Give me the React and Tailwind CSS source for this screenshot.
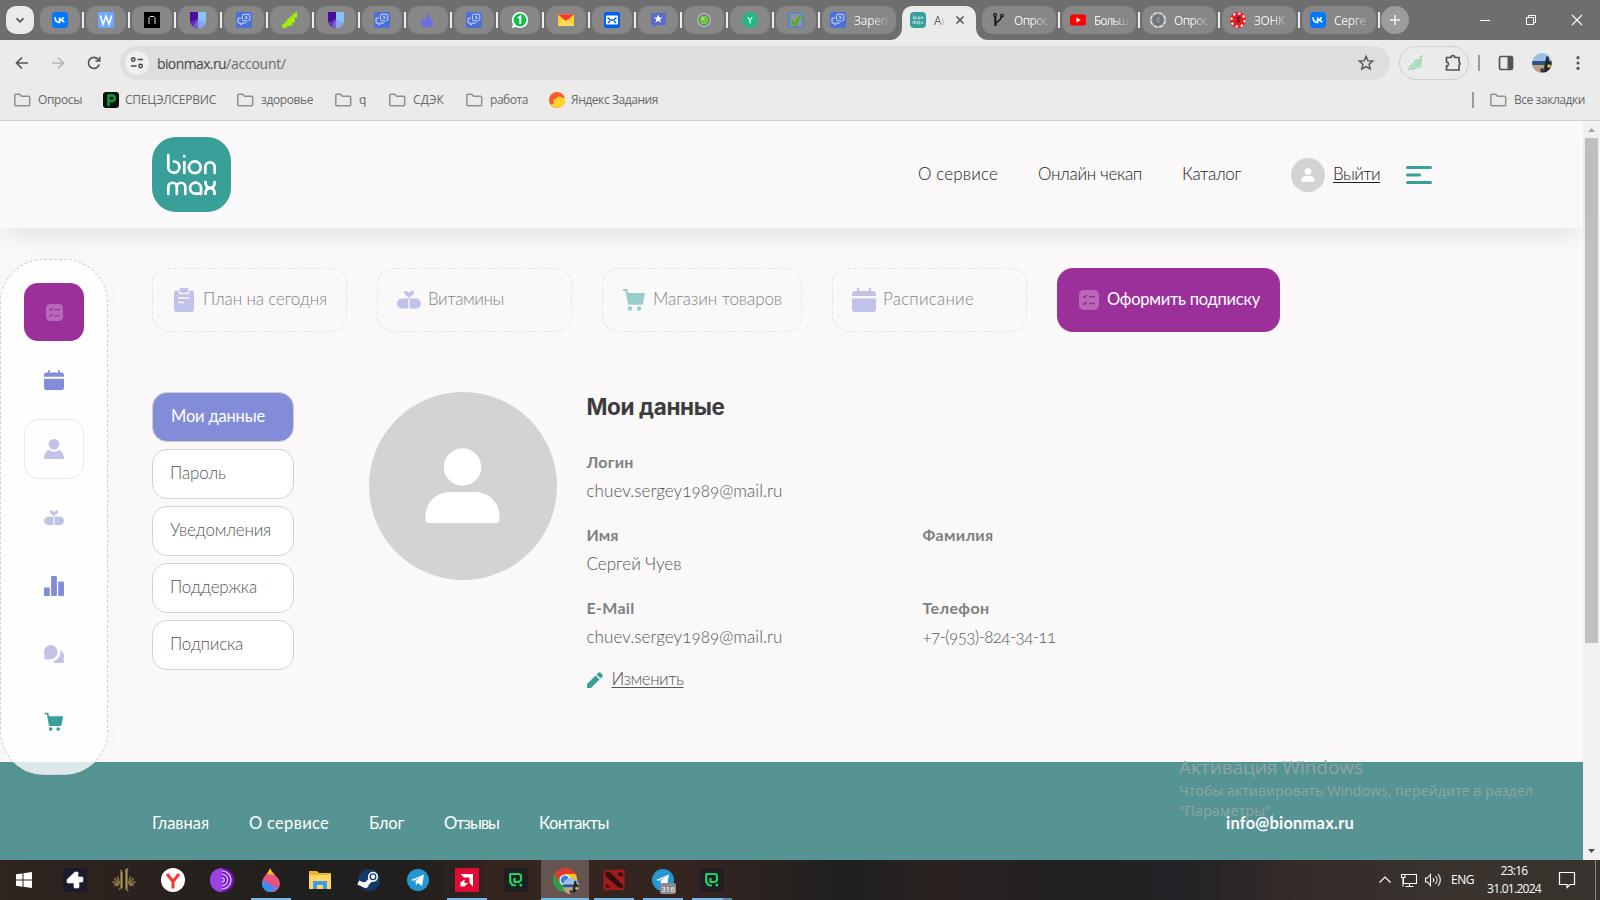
import { useLayoutEffect, useRef, useState } from "react";

/* Text tracked so that it fills exactly `w` pixels. */
function Fit({ w, className = "", children }) {
  const ref = useRef(null);
  const [ls, setLs] = useState(0);
  useLayoutEffect(() => {
    const natural = ref.current.getBoundingClientRect().width;
    setLs((w - natural) / String(children).length);
  }, []);
  return (
    <span ref={ref} className={"inline-block whitespace-pre " + className} style={{ letterSpacing: ls + "px" }}>
      {children}
    </span>
  );
}

const ui = "font-['Open_Sans','Noto_Sans',sans-serif]";

/* ---------- favicons ---------- */
const Svg = ({ s = 16, vb = "0 0 16 16", className = "", children }) => (
  <svg width={s} height={s} viewBox={vb} fill="none" className={"shrink-0 " + className}>{children}</svg>
);
const Vk = () => (
  <Svg><rect width="16" height="16" rx="4" fill="#0077ff" />
    <path d="M3 5.3c.2 3.3 2 5.2 4.600 5.200V5.300M7.600 8c2 0 3.200-1 3.900-2.700M7.800 8c2.200 0 3.700 1 4.300 2.500" stroke="#fff" strokeWidth="1.700" /></Svg>
);
const Wico = () => (
  <Svg><rect width="16" height="16" fill="#6ea8fa" /><path d="M2.300 3.500 5 12.300 8 4l3 8.300 2.700-8.800" stroke="#fff" strokeWidth="1.600" /></Svg>
);
const Nico = () => (
  <Svg><rect width="16" height="16" fill="#000" /><path d="M5 12V5.500l1-1h4l1 1V12" stroke="#ddd" strokeWidth="1" /></Svg>
);
const Shield = () => (
  <Svg><path d="M0 0h8v16A8 8 0 0 1 0 8z" fill="#4b0c9c" /><path d="M8 0h8v8a8 8 0 0 1-8 8z" fill="#86c2f8" />
    <path d="M.5 10.500 8 7v9a8 8 0 0 1-7.500-5.500z" fill="#5f35b5" /><path d="M3.500 14.500 8 7v9a8 8 0 0 1-4.500-1.500z" fill="#7a62d0" /><path d="m8 7 7.300 4.500A8 8 0 0 1 8 16z" fill="#8ba4f0" /></Svg>
);
const Chat = () => (
  <Svg><rect width="16" height="16" rx="2" fill="#4a6fd6" />
    <path d="M6.500 3.200q0-.9.900-.9l5.600-.1q.8 0 .8.900v4.500q0 .9-.9.900h-1l-1 1.200-1-1.200H7.400q-.9 0-.9-.9z" stroke="#c9d6fb" strokeWidth="1" />
    <path d="M5 6H3q-1 0-1 1v3q0 1 1 1h1l1.200 1.700L6.400 11H9q.8 0 .8-.8" stroke="#c9d6fb" strokeWidth="1.100" />
    <path d="M11.200 4.200H9.600v1.200h1.500v1.300H9.400" stroke="#c9d6fb" strokeWidth=".8" /></Svg>
);
const Green = () => (
  <Svg><path d="M1.500 15v-2M4 14.500V10.500M6.500 13V7.500M9 12.500V5.500M11.500 9.500V3M14 4.500V1.500" stroke="#a4f307" strokeWidth="2.500" strokeLinecap="round" /></Svg>
);
const Purple = () => <Svg><path d="M8 0 10.500 7 13 8.500V15H2L1 7.500l5 1z" fill="#6a6ee0" /></Svg>;
const Wa = () => (
  <Svg><path d="M8 0a8 8 0 1 1-3.700 15L0 16l1-4A8 8 0 0 1 8 0z" fill="#fff" /><circle cx="8" cy="8" r="6.500" fill="#0fc04a" />
    <path d="M6 6l2.300-1.500V12" stroke="#fff" strokeWidth="1.900" /></Svg>
);
const MailY = () => (
  <Svg><path d="M0 2.500h16V14H0z" fill="#ffcf33" /><path d="M0 2.500h16L8 9z" fill="#f33" /><path d="M0 14 6 7.500 8 9l2-1.500 6 6.500z" fill="#ffdc60" /></Svg>
);
const MailB = () => (
  <Svg><rect width="16" height="16" rx="2" fill="#005ff9" /><rect x="2" y="3.500" width="12" height="9" rx="1" fill="#fff" />
    <path d="m3.500 5.500 3 2.500h3l3-2.500M4 11l2-2M12 11l-2-2" stroke="#005ff9" strokeWidth="1.500" /></Svg>
);
const Star = () => (
  <Svg><path d="M1 1h15v12H7l-4 2.500V13H1z" fill="#5c6bc8" /><path d="m8.200 2.500 1.200 3h3L10 7.500l1 3-2.800-1.800-2.800 1.800 1-3L4 5.500h3z" fill="#fff" /></Svg>
);
const Dot = () => (
  <Svg><circle cx="8" cy="8" r="6.300" fill="#6b7567" stroke="#bbb" strokeWidth="1.300" /><circle cx="8" cy="8" r="4.500" fill="#6cc644" /><circle cx="7" cy="6.500" r="1.500" fill="#a7e58a" /></Svg>
);
const Yico = () => (
  <Svg><circle cx="8" cy="8" r="8" fill="#27b383" /><path d="m5.700 5 2.300 3.300L10.300 5M8 8v3.500" stroke="#d8fff0" strokeWidth="1.300" /></Svg>
);
const Check = () => (
  <Svg><path d="M1 1h14v14H1z" fill="#8d95a0" stroke="#5183cc" strokeWidth="1.500" /><path d="m3.500 8.500 3.500 4.500L13 3" stroke="#4faf16" strokeWidth="2.300" /></Svg>
);
const Bion = () => (
  <Svg><rect width="16" height="16" rx="4" fill="#38a098" />
    <path d="M3.500 3v4h2V5h-2M6.800 4.800V7M8.300 5h1.700v2H8.300zM11.200 7V5h1.800v2M3 12V9.500h3V12M4.500 9.500V12M7.500 9.500h2V12h-2zM11 9.500l2.300 2.500M13.300 9.500 11 12" stroke="#bfe5e0" strokeWidth=".8" /></Svg>
);
const Fork = () => (
  <Svg><circle cx="5" cy="3" r="1.400" stroke="#111" strokeWidth="1.100" /><circle cx="12" cy="3.500" r="1.300" stroke="#111" strokeWidth="1.100" />
    <path d="M5.200 4.500 5.600 14" stroke="#111" strokeWidth="2" /><path d="M6 11c1.500-1.500 4.500-2 5.300-6" stroke="#111" strokeWidth="1.400" /></Svg>
);
const Yt = () => <Svg><rect y="2.500" width="16" height="11" rx="2.500" fill="#f00" /><path d="M6.500 5.500 11 8l-4.500 2.500z" fill="#fff" /></Svg>;
const Coin = () => (
  <Svg><circle cx="8" cy="8" r="7.200" stroke="#dfe2e4" strokeWidth="1.600" strokeDasharray="4.600 1.050" /><circle cx="8" cy="8" r="5.200" fill="#6e7378" />
    <path d="M10 6c-2-1.500-4 .3-2 1.500 2.500 1.200 1 3.200-2 2" stroke="#999da1" strokeWidth="1.200" /></Svg>
);
const Chip = () => (
  <Svg><circle cx="8" cy="8" r="8" fill="#ee1c20" /><circle cx="8" cy="8" r="6.600" stroke="#fff" strokeWidth="2" strokeDasharray="2.400 2.784" /><circle cx="8" cy="8" r="4.700" fill="#e0262b" />
    <path d="M10.500 6c-2-1.700-5 .3-2.500 1.500 2.500 1.200 1 3.200-2 2" stroke="#501216" strokeWidth="1.300" /></Svg>
);

const pinned = [Vk, Wico, Nico, Shield, Chat, Green, Shield, Chat, Purple, Chat, Wa, MailY, MailB, Star, Dot, Yico, Check];
const later = [[Fork, "Опрос", 34], [Yt, "Больш", 34], [Coin, "Опрос", 34], [Chip, "ЗОНК", 31], [Vk, "Серге", 32]];

const Sep = () => <div className="mx-0.5 h-4 w-0.5 shrink-0 bg-[#ececec]" />;

function WideTab({ Icon, text, w }) {
  return (
    <div className="flex h-7 w-[74px] shrink-0 items-center gap-2 overflow-hidden rounded-[10px] bg-[#878787] pl-2">
      <Icon />
      <div className="w-[36px] overflow-hidden mask-r-from-50% text-[12px] leading-5 text-[#f2f2f2]"><Fit w={w} className="mt-px">{text}</Fit></div>
    </div>
  );
}

function TabStrip() {
  return (
    <div className={"flex h-10 items-center bg-[#6e6e6e] pl-1.5 " + ui}>
      <div className="mr-1.5 flex h-7 w-7 shrink-0 items-center justify-center rounded-[10px] bg-[#ebebeb]">
        <Svg><path d="m4.500 6.300 3.500 3.500 3.500-3.500" stroke="#555" strokeWidth="1.700" /></Svg>
      </div>
      {pinned.map((I, i) => (
        <div key={i} className="flex shrink-0 items-center">
          <div className="flex h-7 w-10 items-center justify-center rounded-[10px] bg-[#878787]"><I /></div>
          <Sep />
        </div>
      ))}
      <WideTab Icon={Chat} text="Зареп" w={34} />
      <div className="relative mx-1.5 mt-1.5 flex h-[34px] w-[74px] shrink-0 items-center rounded-t-[10px] bg-[#ebebeb] pb-1.5 pl-2">
        <svg width="12" height="12" className="absolute bottom-0 -left-3"><path d="M12 0v12H0A12 12 0 0 0 12 0z" fill="#ebebeb" /></svg>
        <svg width="12" height="12" className="absolute -right-3 bottom-0"><path d="M0 0v12h12A12 12 0 0 1 0 0z" fill="#ebebeb" /></svg>
        <Bion />
        <div className="ml-2 w-[11px] overflow-hidden mask-r-from-40% pt-px text-[12px] text-[#555]">Ак</div>
        <Svg className="ml-[7px]"><path d="m4.500 4.500 7 7m0-7-7 7" stroke="#555" strokeWidth="1.600" /></Svg>
      </div>
      {later.map(([I, t, w], i) => (
        <div key={i} className="flex shrink-0 items-center"><WideTab Icon={I} text={t} w={w} /><Sep /></div>
      ))}
      <div className="-ml-px flex h-7 w-7 shrink-0 items-center justify-center rounded-full bg-[#9c9c9c]">
        <Svg><path d="M8 3v10M3 8h10" stroke="#f4f4f4" strokeWidth="1.500" /></Svg>
      </div>
      <div className="mr-[17px] ml-auto flex gap-[34px]">
        <Svg s={12} vb="0 0 12 12"><path d="M1 6.500h10" stroke="#fff" /></Svg>
        <Svg s={12} vb="0 0 12 12"><path d="M1.500 3.500h7v7h-7zM3.500 3.500v-2h7v7h-2" stroke="#fff" /></Svg>
        <Svg s={12} vb="0 0 12 12"><path d="m1 1 10 10M11 1 1 11" stroke="#fff" strokeWidth="1.100" /></Svg>
      </div>
    </div>
  );
}

function Toolbar() {
  return (
    <div className={"flex h-[46px] items-center bg-[#ebebeb] pl-[14px] " + ui}>
      <Svg className="mr-5"><path d="M14 8H3M8 2.500 2.500 8 8 13.500" stroke="#555" strokeWidth="1.700" /></Svg>
      <Svg className="mr-5"><path d="M2 8h11M8 2.500 13.500 8 8 13.500" stroke="#b5b5b5" strokeWidth="1.700" /></Svg>
      <Svg className="mr-[18px]"><path d="M13.200 9.500A5.500 5.500 0 1 1 12 4.200L13.500 6M13.700 1.800V6H9.500" stroke="#555" strokeWidth="1.700" /></Svg>
      <div className="flex h-[34px] w-[1270px] items-center rounded-full bg-[#dedede] pl-[5px]">
        <div className="mr-2 flex h-6 w-6 items-center justify-center rounded-full bg-[#f0f0f0]">
          <Svg s={14} vb="0 0 14 14"><path d="M7.500 3.500H13M1 10h5.500" stroke="#444" strokeWidth="1.600" /><circle cx="3.300" cy="3.500" r="1.700" stroke="#444" strokeWidth="1.400" /><circle cx="10.600" cy="10" r="1.700" stroke="#444" strokeWidth="1.400" /></Svg>
        </div>
        <div className="text-[14px] text-[#6a6a6a]"><Fit w={69} className="text-[#444]">bionmax.ru</Fit><Fit w={60}>/account/</Fit></div>
        <Svg s={18} vb="0 0 18 18" className="mr-[15px] ml-auto"><path d="m9 2.300 1.900 4.400 4.800.4-3.600 3.200 1.100 4.700L9 12.500 4.800 15l1.100-4.700-3.600-3.200 4.800-.4z" stroke="#5a5a5a" strokeWidth="1.500" /></Svg>
      </div>
      <div className="ml-[9px] flex h-[34px] w-[70px] items-center rounded-full border border-[#cfcfcf] pl-2">
        <Svg><path d="M0 16c.5-5 4-8 7-9.500l-1.500-1L11 4l1-3 4-.8-2.500 3 .5 3-1 3 1 2-3 1.500-3 .5-2 1.500-3-.2z" fill="#a6d9b8" /><path d="m3 10 8-3M2 12.500l10-2.500" stroke="#c6eacf" strokeWidth=".8" /></Svg>
        <Svg s={18} vb="0 0 18 18" className="ml-5"><path d="M3 3.500h4a1.900 1.900 0 0 1 3.800 0H15v4.400a1.900 1.900 0 0 1 0 3.400V16H2.500v-4c2.500.3 2.500-4.200 0-4V3.500z" stroke="#555" strokeWidth="1.700" /></Svg>
      </div>
      <div className="ml-[9px] h-4 w-0.5 bg-[#9a9a9a]" />
      <Svg className="ml-[18px]"><rect x="1.500" y="1.500" width="13" height="13" rx="1.500" stroke="#555" strokeWidth="1.700" /><path d="M9.500 2H14v12H9.500z" fill="#555" /></Svg>
      <Portrait s={20} className="ml-[18px]" />
      <Svg className="ml-[18px]"><circle cx="8" cy="2.700" r="1.600" fill="#555" /><circle cx="8" cy="8" r="1.600" fill="#555" /><circle cx="8" cy="13.300" r="1.600" fill="#555" /></Svg>
    </div>
  );
}

const Portrait = ({ s, className = "" }) => (
  <svg width={s} height={s} viewBox="0 0 20 20" className={"shrink-0 overflow-hidden rounded-full " + className}>
    <path d="M0 0h20v20H0z" fill="#9cc0e4" /><path d="M0 8h20v4H0z" fill="#2c5688" /><path d="M0 12h20v8H0z" fill="#c0a084" />
    <path d="m14.500 3 2 1 .5 3 2 4-1 5-4 4-5-1-1-3 4-1 1-5z" fill="#26252a" /><circle cx="17" cy="13" r="1.700" fill="#e3c63b" /><circle cx="11" cy="16.500" r="1.500" fill="#555" />
  </svg>
);

const Folder = () => (
  <Svg s={18} vb="0 0 18 18"><path d="M1.800 4.300c0-.6.400-1 1-1h3.900l1.800 2h7.200c.6 0 1 .4 1 1v7.400c0 .6-.4 1-1 1H2.800c-.6 0-1-.4-1-1z" stroke="#8f8f8f" strokeWidth="1.500" /></Svg>
);

function Bookmarks() {
  const cls = "text-[12px] leading-5 text-[#686868]";
  return (
    <div className={"flex h-[34px] items-center bg-[#ebebeb] pb-[6px] pl-[13px] " + ui}>
      <Folder /><Fit w={44} className={cls + " ml-[7px]"}>Опросы</Fit>
      <Svg className="ml-[21px]"><rect width="16" height="16" rx="3" fill="#06130b" /><path d="M5.500 14V3.500H9a2.700 2.700 0 0 1 0 5.500H6" stroke="#0b9a45" strokeWidth="2.600" /></Svg>
      <Fit w={91} className={cls + " ml-[6px]"}>СПЕЦЭЛСЕРВИС</Fit>
      <div className="ml-5 flex items-center gap-[7px]"><Folder /><Fit w={52} className={cls}>здоровье</Fit></div>
      <div className="ml-[21px] flex items-center gap-[7px]"><Folder /><Fit w={8} className={cls}>q</Fit></div>
      <div className="ml-[21px] flex items-center gap-[7px]"><Folder /><Fit w={31} className={cls}>СДЭК</Fit></div>
      <div className="ml-[21px] flex items-center gap-[7px]"><Folder /><Fit w={38} className={cls}>работа</Fit></div>
      <Svg className="ml-[21px]"><circle cx="8" cy="8" r="8" fill="#fd5a2a" /><path d="M1.500 12.500c2.500.5 4-1 3-3-1-1.500.500-3.500 2.500-2 .5-2.500 3.500-4 5-2.500s2.500.500 3.800 1A8 8 0 0 1 1.500 12.500z" fill="#ffd42c" /></Svg>
      <Fit w={87} className={cls + " ml-[6px]"}>Яндекс Задания</Fit>
      <div className="mr-[15px] ml-auto h-4 w-0.5 bg-[#9a9a9a]" />
      <div className="mr-[15px] flex items-center gap-[7px]"><Folder /><Fit w={71} className={cls}>Все закладки</Fit></div>
    </div>
  );
}

/* ---------- site icons ---------- */
const Calendar = ({ s }) => (
  <Svg s={s} vb="0 0 24 24" className="fill-current"><path d="M5 0h2v3h10V0h2v3h2a3 3 0 0 1 3 3v2H0V6a3 3 0 0 1 3-3h2zM0 10.500h24V21a3 3 0 0 1-3 3H3a3 3 0 0 1-3-3z" /></Svg>
);
const Pills = ({ s }) => (
  <Svg s={s} vb="0 0 24 24" className="fill-current"><path d="M7 3c2.500-.3 4 .4 5 2 1-1.600 2.500-2.300 5-2 0 3.300-1.500 5-4.300 5.500v2h6.300a5 5 0 0 1 0 10h-6.300v-10h-1.400v10H5a5 5 0 0 1 0-10h6.300v-2C8.500 8 7 6.300 7 3z" /></Svg>
);
const Cart = ({ s }) => (
  <Svg s={s} vb="0 0 24 24" className="fill-current"><path d="M1 1h4.200l.8 4h17l-2 10.500a1.500 1.500 0 0 1-1.500 1.200H6L3.500 3H1z" /><circle cx="8" cy="20.500" r="2.200" /><circle cx="17" cy="20.500" r="2.200" /></Svg>
);
const Clip = () => (
  <Svg s={24} vb="0 0 24 24"><path d="M4.500 2.500h1.800v1A2.800 2.800 0 0 0 9 6.300h6a2.800 2.800 0 0 0 2.700-2.800v-1h1.800a2.500 2.500 0 0 1 2.500 2.500v16.500a2.500 2.500 0 0 1-2.500 2.500h-15A2.500 2.500 0 0 1 2 21.500V5a2.500 2.500 0 0 1 2.500-2.500z" fill="currentColor" /><rect x="7.300" width="9.400" height="4.800" rx="1.800" fill="currentColor" /><path d="M6.500 10h10M6.500 14.500h5" stroke="#faf8f9" strokeWidth="1.300" strokeLinecap="round" /></Svg>
);
const Tasks = ({ s }) => (
  <Svg s={s} vb="0 0 20 20"><rect width="20" height="20" rx="5" fill="#fff" fillOpacity=".28" />
    <path d="m4 6.600 1.300 1L7.700 5M4 13.400l1.300 1 2.400-2.600M10 6.700h6M10 13.600h6" stroke="#9b309b" strokeWidth="1.500" /></Svg>
);
const Person = () => (
  <Svg s={20} vb="0 0 20 20" className="fill-current"><circle cx="10" cy="5.300" r="5.300" /><path d="M0 20c0-4.500 2-8 4.500-9 3.300 2.200 7.700 2.200 11 0C18 12 20 15.500 20 20z" /></Svg>
);
const Bars = () => (
  <Svg s={20} vb="0 0 20 20" className="fill-current"><rect y="11.500" width="5.800" height="8.500" rx="1" /><rect x="7.100" width="5.800" height="20" rx="1" /><rect x="14.200" y="5.500" width="5.800" height="14.500" rx="1" /></Svg>
);
const Talk = () => (
  <Svg s={20} vb="0 0 20 20" className="fill-current"><path d="M7.500 1A7.200 7.200 0 1 1 5 15.200L.5 15.500V11A7.300 7.300 0 0 1 7.500 1z" /><path d="M16.200 6a6.600 6.600 0 0 1 3.200 9l.6 4-4.500-.3c-2.500.7-5 .3-6.800-1.500C14.500 16.500 17.500 11.500 16.200 6z" /></Svg>
);
const Avatar = ({ s }) => (
  <svg width={s} height={s} viewBox="0 0 188 188" className="shrink-0"><circle cx="94" cy="94" r="94" fill="#d3d3d3" /><circle cx="93.500" cy="75" r="18.700" fill="#fff" />
    <path d="M56.500 125c0-15 11-25 25-25h24c14 0 25 10 25 25v3a3 3 0 0 1-3 3h-68a3 3 0 0 1-3-3z" fill="#fff" /></svg>
);

function Logo() {
  return (
    <svg width="79" height="75" viewBox="0 0 79 75" className="shrink-0">
      <rect width="79" height="75" rx="24" fill="#38a098" />
      <g fill="none" stroke="#fff" strokeWidth="2.700" strokeLinecap="round">
        <path d="M16.300 18v13a5.600 5.600 0 1 0 5.600-6.500" />
        <path d="M32.300 25v11M32.300 19.200v.2" />
        <circle cx="42.800" cy="30.300" r="5.900" />
        <path d="M53.300 36v-6a4.700 4.700 0 0 1 9.400 0v6" />
        <path d="M16.300 57v-7a4.200 4.200 0 0 1 8.500 0v7M24.800 50a4.200 4.200 0 0 1 8.500 0v7" />
        <path d="M49 57v-6.500a5.500 5.500 0 1 0-5.500 6.200H49" />
        <path d="M53.500 45c0 3.500 1.500 5.800 4.600 5.800s4.600-2.300 4.600-5.800M53.500 57c0-3.500 1.500-5.800 4.600-5.800s4.600 2.300 4.600 5.800" />
      </g>
    </svg>
  );
}

function SiteHeader() {
  return (
    <header className="relative flex h-[107px] shrink-0 items-center bg-[#faf8f9] pl-[152px] text-[17px] font-light text-[#222] shadow-[0_12px_22px_-6px_rgba(0,0,0,0.10)]">
      <Logo />
      <nav className="ml-[687px] flex items-center gap-10 pb-0.5">
        <Fit w={80}>О сервисе</Fit><Fit w={104}>Онлайн чекап</Fit><Fit w={59}>Каталог</Fit>
      </nav>
      <div className="ml-[50px] flex items-center gap-2">
        <Avatar s={34} /><Fit w={47} className="-mt-0.5 underline underline-offset-2">Выйти</Fit>
      </div>
      <svg width="26" height="18" className="ml-[26px]"><path d="M1.500 1.500h23M1.500 9h12M1.500 16.500h23" stroke="#38a098" strokeWidth="3" strokeLinecap="round" /></svg>
    </header>
  );
}

function Card({ icon, text, w, className, iconClass }) {
  return (
    <div className={"flex h-16 items-center gap-[7px] rounded-2xl border border-dashed border-[#e3e1e2] pl-[19px] text-[17px] font-light text-[#858485] " + className}>
      <span className={iconClass}>{icon}</span><Fit w={w} className="-mt-0.5">{text}</Fit>
    </div>
  );
}

const menu = [["Пароль", 56], ["Уведомления", 101], ["Поддержка", 87], ["Подписка", 73]];

const Field = ({ label, lw, value, vw }) => (
  <div className="h-[73px] text-[16px] leading-[29px] text-[#808080]">
    <div className="font-bold"><Fit w={lw}>{label}</Fit></div>
    {value && <div className="text-[17px] font-light text-[#555] oldstyle-nums"><Fit w={vw}>{value}</Fit></div>}
  </div>
);

function Page() {
  return (
    <div className="relative flex h-[739px] font-[Lato,'Open_Sans',sans-serif]">
      <div className="flex w-[1583px] shrink-0 flex-col bg-[#faf8f9]">
        <SiteHeader />
        <div className="flex gap-[30px] pt-10 pl-[152px]">
          <Card className="w-[195px]" icon={<Clip />} iconClass="text-[#bfc2e9]" text="План на сегодня" w={124} />
          <Card className="w-[195px]" icon={<Pills s={24} />} iconClass="text-[#bfc2e9]" text="Витамины" w={76} />
          <Card className="w-[200px]" icon={<Cart s={24} />} iconClass="text-[#99cec8]" text="Магазин товаров" w={129} />
          <Card className="w-[195px]" icon={<Calendar s={24} />} iconClass="text-[#bfc2e9]" text="Расписание" w={91} />
          <div className="flex h-16 w-[223px] items-center gap-2 rounded-2xl bg-[#9b309b] pl-[22px] text-[16.500px] text-white"><Tasks s={20} /><Fit w={153} className="-mt-0.5">Оформить подписку</Fit></div>
        </div>
        <div className="flex pt-[60px] pl-[152px]">
          <div className="flex w-[142px] flex-col gap-[7px] text-[17px] font-light text-[#555]">
            <div className="flex h-[50px] items-center rounded-[15px] border border-[#cfcfd3] bg-[#838cd8] pb-0.5 pl-[18px] text-[16.500px] font-normal text-white"><Fit w={94}>Мои данные</Fit></div>
            {menu.map(([t, w]) => (
              <div key={t} className="flex h-[50px] items-center rounded-[15px] border border-[#d3d3d3] bg-white pb-0.5 pl-[17px]"><Fit w={w}>{t}</Fit></div>
            ))}
          </div>
          <div className="ml-[75px]"><Avatar s={188} /></div>
          <div className="ml-[29.500px]">
            <h1 className="mt-px mb-[26px] font-[Inter,sans-serif] text-[22.500px] leading-7 font-bold text-[#3c3c3c]"><Fit w={138}>Мои данные</Fit></h1>
            <div className="grid grid-cols-[336px_auto]">
              <Field label="Логин" lw={47} value="chuev.sergey1989@mail.ru" vw={196} /><div />
              <Field label="Имя" lw={32} value="Сергей Чуев" vw={95} />
              <Field label="Фамилия" lw={71} />
              <Field label="E-Mail" lw={48} value="chuev.sergey1989@mail.ru" vw={196} />
              <Field label="Телефон" lw={67} value="+7-(953)-824-34-11" vw={133} />
            </div>
            <div className="-mt-0.5 flex items-center gap-[9px] text-[17px] leading-[29px] font-light text-[#555]">
              <Svg className="mt-0.5"><path d="M0 12 8.500 3.500l4 4L4 16H0zM9.500 2.500 11 .9a2 2 0 0 1 2.800 0l1.300 1.300a2 2 0 0 1 0 2.800l-1.600 1.500z" fill="#38a098" /></Svg>
              <Fit w={72} className="underline underline-offset-2">Изменить</Fit>
            </div>
          </div>
        </div>
        <footer className="mt-auto flex h-[98px] items-center bg-[#569393] pt-6 pl-[152px] text-[16.500px] text-white">
          <nav className="flex gap-10">
            <Fit w={57}>Главная</Fit><Fit w={80}>О сервисе</Fit><Fit w={35}>Блог</Fit><Fit w={55}>Отзывы</Fit><Fit w={70}>Контакты</Fit>
          </nav>
          <Fit w={128} className="ml-[617px] font-bold">info@bionmax.ru</Fit>
        </footer>
      </div>
      <div className="flex w-[17px] flex-col items-center bg-[#f1f1f1]">
        <svg width="17" height="17"><path d="m5 11 3.500-4 3.500 4z" fill="#a3a3a3" /></svg>
        <div className="h-[505px] w-[13px] bg-[#c1c1c1]" />
        <svg width="17" height="17" className="mt-auto"><path d="m5 6 3.500 4L12 6z" fill="#505050" /></svg>
      </div>
      <aside className="absolute top-[138px] left-0 flex h-[516px] w-[108px] flex-col items-center rounded-[44px] border border-dashed border-[#cfcfcf] bg-white/80 pt-[23px] text-[#bfc2e9] shadow-[0_0_24px_0_rgba(0,0,0,0.02)]">
        <div className="flex h-[58px] w-[60px] items-center justify-center rounded-[14px] bg-[#9b309b]"><Tasks s={17} /></div>
        <div className="mt-[29px] text-[#838cd8]"><Calendar s={20} /></div>
        <div className="mt-[29px] flex h-[60px] w-[60px] items-center justify-center rounded-[14px] border border-[#e9e9e9]"><Person /></div>
        <div className="mt-[29px]"><Pills s={20} /></div>
        <div className="mt-[48px] text-[#838cd8]"><Bars /></div>
        <div className="mt-[48px]"><Talk /></div>
        <div className="mt-[48px] text-[#38a098]"><Cart s={20} /></div>
      </aside>
      <div className={"absolute top-[633px] left-[1179px] flex w-[370px] flex-col items-start text-[#8fa5a4] " + ui}>
        <Fit w={184} className="text-[19px] leading-[27px]">Активация Windows</Fit>
        <Fit w={354} className="text-[14px] leading-5">Чтобы активировать Windows, перейдите в раздел</Fit>
        <Fit w={96} className="text-[14px] leading-5">"Параметры".</Fit>
      </div>
    </div>
  );
}

/* ---------- taskbar ---------- */
const Pbet = () => (
  <Svg s={24} vb="0 0 24 24"><rect width="24" height="24" fill="#1f1f21" /><path d="M12 17.500 8.500 17 6.200 14V6h8.300q2.500 0 2.500 2.500v3.500l-2 2h-4.500V10" stroke="#21d366" strokeWidth="2.200" strokeLinejoin="round" /><circle cx="16.800" cy="17" r="1.500" fill="#21d366" /></Svg>
);
const Tg = () => (
  <Svg s={24} vb="0 0 24 24"><circle cx="12" cy="12" r="11" fill="#2297d3" /><path d="m5 12 13-5.500-2 11.500-4-3-2 2-.5-4 5-4-6.500 3.700z" fill="#fff" /></Svg>
);
const apps = [
  [<Svg s={16} className="-ml-1"><path d="M0 2.300 6.500 1.400V7.500H0zM7.500 1.200 16 0v7.500H7.500zM0 8.500h6.500v6.200L0 13.800zM7.500 8.500H16V16l-8.500-1.200z" fill="#fff" /></Svg>],
  [<Svg s={24} vb="0 0 24 24"><rect width="24" height="24" rx="3" fill="#1b1b2d" /><path d="M12 4h3v5h4q1 0 1 1v3q0 1-1 1h-3v5q0 1-1 1h-3q-1 0-1-1v-4H5q-1 0-1-1v-2.500z" fill="#fff" stroke="#fff" strokeWidth=".6" strokeLinejoin="round" /></Svg>],
  [<Svg s={24} vb="0 0 24 24"><path d="M9.500 3.500v17M14.500 1v20.500" stroke="#b29b5c" strokeWidth="2" /><path d="M8 2.500h1.500M14.500 1H16.500M8.500 21h-2M14.500 22.500h2" stroke="#b29b5c" strokeWidth="1" /><path d="M7.500 16 5.500 8.500M7 16.500 2.500 10M6.500 17 .5 13.500M6.500 17.500 2 17M16.500 16l2-7.500M17 16.500l4.500-6.500M17.500 17l6-3.500M17.500 17.500l4.500-.5" stroke="#8a7745" strokeWidth="1.500" /></Svg>],
  [<Svg s={24} vb="0 0 24 24"><circle cx="12" cy="12" r="12" fill="#fff" /><path d="m6 6 6 7.500L18 6M12 13v7.500" stroke="#f33a32" strokeWidth="3" /></Svg>],
  [<Svg s={24} vb="0 0 24 24"><circle cx="12" cy="12" r="12" fill="#7212c9" /><path d="M12 0a12 12 0 0 0 0 24z" fill="#9b43e4" /><path d="M12 3a9 9 0 0 1 0 18M12 6.300a5.700 5.700 0 0 1 0 11.400M12 9.800a2.200 2.200 0 0 1 0 4.400" stroke="#d9b4f7" strokeWidth="1.500" /></Svg>],
  [<Svg s={24} vb="0 0 24 24"><path d="M11 0c1 5 10 9 10 15.500a9 9 0 0 1-18 0C3 9 9 6 11 0z" fill="#e5557c" /><path d="M11 0c1 3 3 5 5 7l-8-1c1.500-2 2.500-3.500 3-6z" fill="#fcc50c" /><path d="M4 12c5-1 8 7 16 6a9 9 0 0 1-16.500 0z" fill="#8d6bd1" /><path d="M3 15c5-1 8 6 14 6.500C11 26 3 23 3 15z" fill="#1d9cf0" /></Svg>, "w-10"],
  [<Svg s={24} vb="0 0 24 24"><path d="M1 3h8l2 2h12v16H1z" fill="#f0b429" /><path d="M1 7h22v14H1z" fill="#ffd667" /><path d="M5 13h14v8h-4v-4H9v4H5z" fill="#3b9be6" /></Svg>],
  [<Svg s={24} vb="0 0 24 24"><circle cx="12" cy="12" r="11" fill="#12396a" /><path d="M1.200 14.500 7 17" stroke="#fff" strokeWidth="4.500" /><circle cx="8.500" cy="17" r="3" fill="#fff" /><path d="m9 16.500 5-5" stroke="#fff" strokeWidth="4.500" /><circle cx="16" cy="8.800" r="4.300" fill="#12396a" stroke="#fff" strokeWidth="1.600" /><circle cx="16" cy="8.800" r="2.200" fill="#fff" /></Svg>],
  [<Tg />],
  [<Svg s={24} vb="0 0 24 24"><rect width="24" height="24" fill="#df0a35" /><path d="M5.500 6H18v12.500l-3.500-3.500V9.500H9zM9.500 11.500V15h3.500L9.500 18.500H5.500v-4z" fill="#fff" /></Svg>, "w-10"],
  [<Pbet />],
  [<div className="relative h-6 w-6"><Svg s={24} vb="0 0 24 24"><circle cx="12" cy="12" r="12" fill="#dd3b2e" /><path d="M12 12 1.600 6A12 12 0 0 0 12 24l5-9z" fill="#2c9e4b" /><path d="M12 12h0l5.200 3L12 24A12 12 0 0 0 22.400 6H12z" fill="#fbc117" /><path d="M1.600 6A12 12 0 0 1 22.400 6H12v6L6.800 15z" fill="#dd3b2e" /><circle cx="12" cy="12" r="5.600" fill="#fff" /><circle cx="12" cy="12" r="4.400" fill="#3b7ded" /></Svg><Portrait s={16} className="absolute -right-0.5 -bottom-0.5" /></div>, "w-12", true],
  [<Svg s={24} vb="0 0 24 24"><path d="m1.500 2 21-.5v20.500l-21 .5z" fill="#a31a1d" /><path d="m3.500 3.500 4 .5L21 17v3.500l-4.500-1L3.500 8zM16 4.500h4.500v5L16 7zM4 15l4.500 4.500H4z" fill="#2d1010" /></Svg>, "w-10"],
  [<div className="relative h-6 w-6"><Tg /><span className="absolute top-[15px] left-[9px] h-[11px] w-4 rounded-xs bg-[#8b8b8b] text-center text-[8px] leading-[11px] text-white">316</span></div>, "w-10"],
  [<Pbet />, "w-10", false, true],
];

function Taskbar() {
  return (
    <div className={"flex h-10 items-center bg-[linear-gradient(90deg,#30251f_0%,#2a221e_8%,#1f1f1e_20%,#22201e_26%,#35251f_31%,#33241f_44%,#1f2020_53%,#2a2220_58%,#232023_66%,#242226_74%,#352b28_81%,#3a332e_92%,#38322d_100%)] text-[12px] text-white " + ui}>
      <div className="flex h-10 w-[770px] gap-px pl-0.5">
        {apps.map(([icon, bar, active, split], i) => (
          <div key={i} className={"relative flex h-10 w-12 shrink-0 items-center justify-center " + (active ? "bg-[#65544f]" : "")}>
            {icon}
            {bar && <div className={"absolute bottom-0 flex h-0.5 justify-end bg-[#76b9ed] " + bar}>{split && <div className="h-0.5 w-[9px] bg-[#5a86ab]" />}</div>}
          </div>
        ))}
      </div>
      <Svg s={14} vb="0 0 14 14" className="ml-[608px]"><path d="m1.500 9.500 5.500-5.500 5.500 5.500" stroke="#fff" strokeWidth="1.200" /></Svg>
      <Svg s={18} vb="0 0 18 18" className="ml-2"><path d="M5.500 3.500h11v9H3.500V7M9.500 12.500V15M5.500 15.500h8M1.500 3.500h3.500v3H1.500zM3 6.500v9" stroke="#fff" strokeWidth="1.100" /></Svg>
      <Svg s={18} vb="0 0 18 18" className="ml-1.5"><path d="M1.500 7h2l3-3.500v11L3.500 11h-2zM9 7a3 3 0 0 1 0 4M11.500 5a6 6 0 0 1 0 8M14 3a9 9 0 0 1 0 12" stroke="#fff" strokeWidth="1.100" /></Svg>
      <Fit w={23} className="ml-[9px]">ENG</Fit>
      <div className="ml-[12px] flex w-[56px] flex-col items-center leading-[18px]"><Fit w={27}>23:16</Fit><Fit w={54}>31.01.2024</Fit></div>
      <Svg s={18} vb="0 0 18 18" className="ml-4"><path d="M1.500 1.500h15v12H12l-3 3v-3H1.500z" stroke="#fff" strokeWidth="1.200" /></Svg>
      <div className="ml-auto h-10 w-px bg-[#8b8683]" /><div className="w-1" />
    </div>
  );
}

export default function App() {
  return (
    <div className="h-[900px] w-[1600px] overflow-hidden">
      <TabStrip />
      <Toolbar />
      <Bookmarks />
      <div className="h-px bg-[#cfcdce]" />
      <Page />
      <Taskbar />
    </div>
  );
}
